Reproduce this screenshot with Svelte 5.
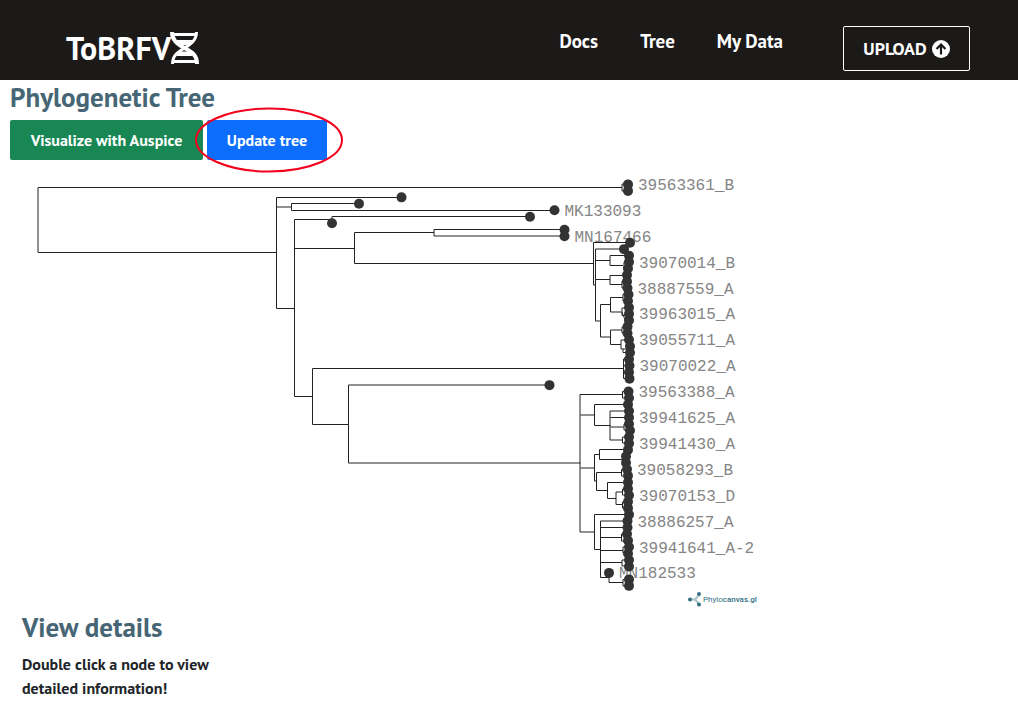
<script>
  const top = 184.4;
  const step = 6.475;
  const leafX = [
    628, 628, 401.5, 359, 554.5, 530, 332, 564.5, 564.5, 630, 624, 629, 629, 628, 627, 627, 627.5, 628.5,
    628, 629, 629, 629, 627.5, 627.5, 629, 630, 630, 629, 629.5, 629, 629.5, 549.5, 628.5, 629, 628, 629,
    629, 629, 630, 629, 629, 628, 626, 626, 627, 628, 628, 628, 629, 628, 628, 629, 627.5, 627.5, 627,
    628, 629, 628, 629, 629, 609, 629, 629
  ];
  const leaves = leafX.map((x, i) => ({ x, y: top + step * i }));
  const labels = [
    '39563361_B', 'MK133093', 'MN167466', '39070014_B', '38887559_A', '39963015_A', '39055711_A',
    '39070022_A', '39563388_A', '39941625_A', '39941430_A', '39058293_B', '39070153_D', '38886257_A',
    '39941641_A-2', 'MN182533'
  ].map((text, i) => ({ text, x: leaves[i * 4].x + 10, y: leaves[i * 4].y + 5.5 }));

  const branches = [
    'M622 187.5H38V252.5H276.5',
    'M628 184H622V191H628',
    'M401 197.5H276.5V308.5H294.5',
    'M276.5 207H291.5M359 203.5H291.5V210.5H554',
    'M332 219.5H294.5V396.5H312.5',
    'M332 223V216.5H530',
    'M294.5 248.5H354.5M434 232.5H354.5V263.5H593.5',
    'M564 229.5H434V236H564',
    'M630 242.5H593.5V285H595.5',
    'M624 249H595.5V321H600.5',
    'M595.5 260.5H610M629 255.5H610V265.5H623',
    'M595.5 279.5H610M627 275.5H610V284.5H622',
    'M610.5 304.5H600.5V337H610.5',
    'M623 297.5H610.5V312H622',
    'M622 330H610.5V344.5H621',
    'M628 262H624V269H628M628 281H622V288H628',
    'M628 294H623V301H628M628 308H622V315.5H628M622 312L625 320H628',
    'M628 327H622V333H628M628 340H621V349H628M623 349V352.5H628',
    'M623 368.5H312.5V424.5H348.5',
    'M629 359H623.5V378.5H629M623 365.5H629M623 372H629',
    'M549 385H348.5V463H580.5',
    'M622 394.5H580V532H594.5',
    'M580.5 415H594.5M628 404.5H594.5V425.5H610.5',
    'M628 411H610V440H622M610.5 417.5H628M610.5 427H624',
    'M628 391.5H622.5V398H628M629 424H624V430H629M628 437H622.5V443H628',
    'M580.5 468H594.5M599.5 454.5H594.5V481H596.5',
    'M628 449.5H599.5V459.5H624',
    'M622 472.5H596.5V490.5H607.5',
    'M628 482.5H607.5V498.5H616',
    'M623 492H616V504.5H622',
    'M628 469.5H621.5V476H628M628 489H622.5V495H628M628 502H622.5V508H628',
    'M628 514.5H594.5V549.5H600.5',
    'M628 521H600.5V577.5H609',
    'M600.5 527.5H628M600.5 537.5H622M600.5 550.5H623M600.5 562.5H622',
    'M628 534H621.5V541H628M628 547H623V553H628M628 560H622V566H628',
    'M609 573V582.5H623M629 579.5H623V586H629'
  ];
</script>

<header>
  <a class="brand" href="#home">
    <span>ToBRFV</span>
    <svg width="29" height="33" viewBox="0 0 29 33" fill="none" stroke="#fff" aria-hidden="true">
      <path stroke-width="4" d="M2 0C2 8 7 12 14.500 16S27 23 27 32" />
      <path stroke-width="3" d="M26.500 0C26.500 8 21 12 14.500 16S2.500 23 2.500 32" />
      <path stroke-width="3" d="M3 2.500H26M7 9.500H22M7 22.500H22M3 29.500H26" />
      <path stroke-width="2" d="M10 12H19M10 20.500H19" />
    </svg>
  </a>
  <nav>
    <a href="#docs">Docs</a>
    <a href="#tree">Tree</a>
    <a href="#data">My Data</a>
  </nav>
  <button class="upload">
    <span>UPLOAD</span>
    <svg width="18" height="18" viewBox="0 0 18 18" aria-hidden="true">
      <circle cx="9" cy="9" r="9" fill="#fff" />
      <path d="M9 14.500V4.500M4.500 9L9 4.500L13.500 9" fill="none" stroke="#1b1a19" stroke-width="2.200" />
    </svg>
  </button>
</header>

<main>
  <h1>Phylogenetic Tree</h1>
  <div class="actions">
    <button class="auspice">Visualize with Auspice</button>
    <div class="marked">
      <button class="update">Update tree</button>
      <svg class="ring" width="148" height="66" viewBox="0 0 148 66" aria-hidden="true">
        <ellipse cx="74" cy="33" rx="73" ry="31.500" fill="none" stroke="#f3001d" stroke-width="2" />
      </svg>
    </div>
  </div>

  <svg class="tree" viewBox="10 170 760 440" role="img" aria-label="Phylogenetic tree">
    <g class="labels">
      {#each labels as label}
        <text x={label.x} y={label.y}>{label.text}</text>
      {/each}
    </g>
    <path class="branches" d={branches.join('')} />
    <g class="nodes">
      {#each leaves as leaf}
        <circle cx={leaf.x} cy={leaf.y} r="5" />
      {/each}
    </g>
    <g class="credit">
      <path d="M690 599.500H695L699 595M695 599.500L699 604" fill="none" stroke="#a9c3ca" stroke-width="2" />
      <circle cx="690" cy="599.500" r="2" />
      <circle cx="699" cy="594" r="2" />
      <circle cx="699" cy="604.500" r="2" />
      <text x="703" y="602">Phylo<tspan class="strong">canvas.gl</tspan></text>
    </g>
  </svg>

  <section>
    <h2>View details</h2>
    <p>Double click a node to view detailed information!</p>
  </section>
</main>

<style>
  :global(body) {
    margin: 0;
    background: #fff;
  }
  header,
  main,
  button {
    font-family: 'PT Sans', Lato, sans-serif;
    font-weight: 700;
  }
  header {
    display: flex;
    align-items: flex-start;
    box-sizing: border-box;
    height: 80px;
    padding: 26px 48px 0 66px;
    background: #1b1a19;
    color: #fff;
  }
  a {
    color: inherit;
    text-decoration: none;
  }
  .brand {
    display: flex;
    align-items: center;
    margin-top: 5px;
    font-size: 32px;
    line-height: 34px;
  }
  .brand svg {
    margin-left: -1px;
  }
  nav {
    display: flex;
    gap: 42px;
    margin-left: auto;
    font-size: 19px;
    line-height: 30px;
  }
  button {
    border: 0;
    border-radius: 2px;
    color: #fff;
    white-space: nowrap;
    cursor: pointer;
  }
  .upload {
    display: flex;
    align-items: center;
    justify-content: center;
    gap: 5px;
    box-sizing: border-box;
    width: 127px;
    height: 45px;
    margin-left: 60px;
    padding: 0;
    border: 1px solid #fff;
    background: transparent;
    font-size: 18px;
  }
  main {
    padding: 0 10px;
  }
  h1,
  h2 {
    margin: 0;
    color: #466675;
    font-size: 27px;
    line-height: 34px;
  }
  .actions {
    display: flex;
    gap: 4px;
    margin-top: 6px;
  }
  .actions button {
    height: 40px;
    padding: 0;
    font-size: 16px;
  }
  .actions .auspice {
    width: 193px;
    background: #198754;
  }
  .actions .update {
    width: 120px;
    background: #0d6efd;
  }
  .marked {
    position: relative;
  }
  .ring {
    position: absolute;
    top: -13px;
    left: -12px;
    pointer-events: none;
  }
  .tree {
    display: block;
    width: 100%;
    max-width: 760px;
    margin-top: 10px;
  }
  .branches {
    fill: none;
    stroke: #222;
    stroke-width: 1;
  }
  .nodes {
    fill: #333;
  }
  .labels {
    fill: #858585;
    font-family: 'Liberation Mono', monospace;
    font-size: 16px;
    font-weight: 400;
  }
  .credit {
    fill: #347083;
    font-family: Roboto, sans-serif;
    font-size: 8px;
    font-weight: 400;
  }
  .strong {
    font-weight: 500;
  }
  section {
    padding: 0 12px;
  }
  p {
    max-width: 200px;
    margin: 8px 0 0;
    color: #212529;
    font-size: 16px;
    line-height: 24px;
  }
</style>
